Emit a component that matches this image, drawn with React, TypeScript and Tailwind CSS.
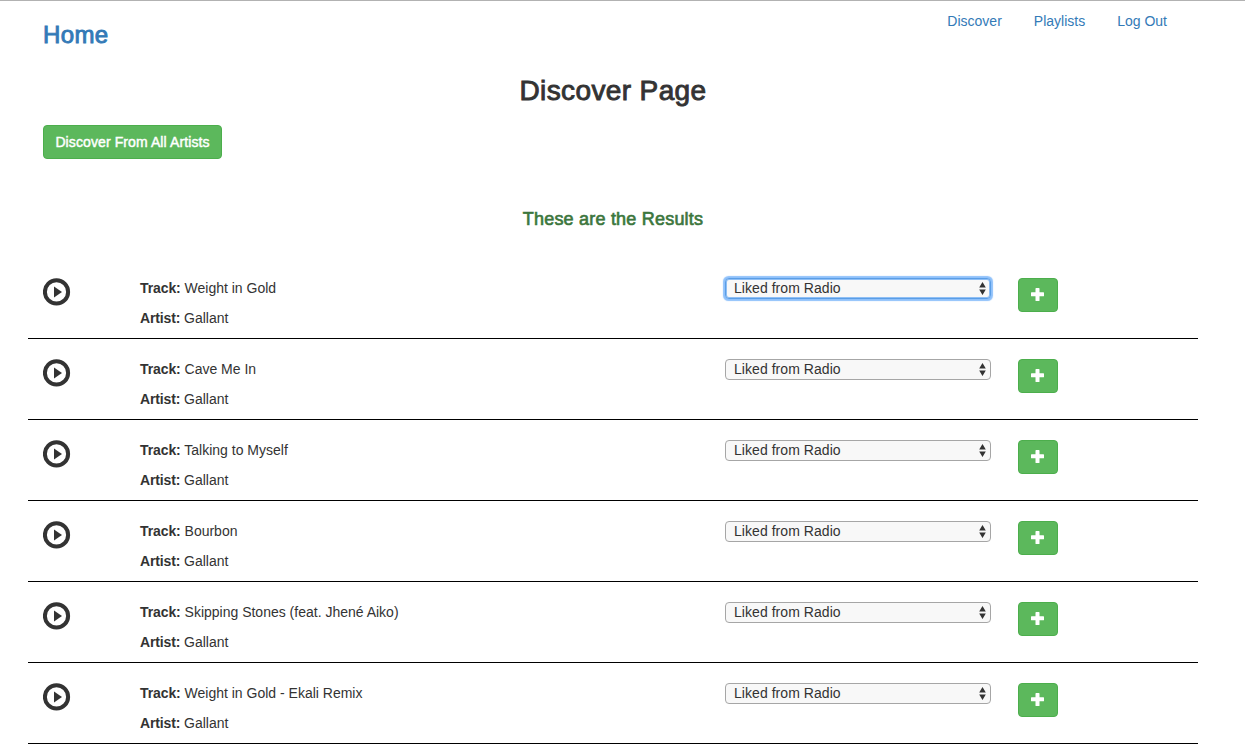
import React from "react";

const tracks = [
  { title: "Weight in Gold", artist: "Gallant" },
  { title: "Cave Me In", artist: "Gallant" },
  { title: "Talking to Myself", artist: "Gallant" },
  { title: "Bourbon", artist: "Gallant" },
  { title: "Skipping Stones (feat. Jhené Aiko)", artist: "Gallant" },
  { title: "Weight in Gold - Ekali Remix", artist: "Gallant" },
];

function PlayIcon() {
  return (
    <svg width="28" height="28" viewBox="0 0 28 28" className="block">
      <circle cx="13.5" cy="13.9" r="11.6" fill="none" stroke="#333" strokeWidth="4" />
      <path d="M11 8.4 19 13.9 11 19.4Z" fill="#333" />
    </svg>
  );
}

function PlaylistSelect({ focused }: { focused: boolean }) {
  return (
    <button
      type="button"
      className={
        "flex h-[21px] w-[266px] items-center justify-between rounded-[4px] border bg-[#f8f8f8] pl-2 pr-1 text-left " +
        (focused
          ? "border-[#5b9ee6] shadow-[inset_0_0_0_1px_#8fbff5,0_0_1px_1.5px_#8fc1fb]"
          : "border-[#a6a6a6]")
      }
    >
      <span className="leading-[19px] tracking-[0.05px]">Liked from Radio</span>
      <svg width="7" height="13" viewBox="0 0 7 13" fill="#333">
        <path d="M3.5 0.1 6.8 5.6H0.2ZM3.5 12.9 6.8 7.6H0.2Z" />
      </svg>
    </button>
  );
}

function TrackRow({ title, artist, focused }: { title: string; artist: string; focused: boolean }) {
  return (
    <div className="grid h-[81px] grid-cols-12 items-start border-b border-black pt-5">
      <div className="pl-[15px]">
        <PlayIcon />
      </div>
      <div className="col-span-6 pl-[14.5px]">
        <p className="mb-2.5">
          <b className="tracking-[-0.1px]">Track:</b> {title}
        </p>
        <p>
          <b className="tracking-[-0.15px]">Artist:</b> {artist}
        </p>
      </div>
      <div className="col-span-3 pl-[14.5px]">
        <PlaylistSelect focused={focused} />
      </div>
      <div className="col-span-2 pl-[15px]">
        <button
          type="button"
          aria-label="Add"
          className="flex h-[34px] w-10 items-center justify-center rounded border border-[#4cae4c] bg-[#5cb85c] pb-px pr-0.5"
        >
          <svg width="13" height="13" viewBox="0 0 13 13" fill="#fff">
            <path d="M5 0h3q.5 0 .5.4v3.9h3.9q.6 0 .6.5v3q0 .5-.6.5H8.500v4.200q0 .5-.5.5H5q-.5 0-.5-.5V8.300H.6Q0 8.300 0 7.800V4.800q0-.5.6-.5h3.900V.4Q4.500 0 5 0Z" />
          </svg>
        </button>
      </div>
    </div>
  );
}

export default function App() {
  return (
    <div className="h-[751px] overflow-hidden border-t border-[#b2b2b2] bg-white font-['Liberation_Sans',Arial,sans-serif] text-sm leading-5 text-[#333]">
      <div className="ml-7 w-[1170px]">
        <header className="flex h-[73px] justify-between pl-[15px] pr-[31px] text-[#337ab7]">
          <a className="pt-5 text-2xl leading-[27px] tracking-[0.4px] [-webkit-text-stroke:0.9px]">Home</a>
          <nav className="flex gap-8 pt-2.5">
            <a>Discover</a>
            <a>Playlists</a>
            <a>Log Out</a>
          </nav>
        </header>
        <h1 className="h-[51px] text-center text-[28px] leading-[33px] tracking-[0.38px] [-webkit-text-stroke:0.9px]">
          Discover Page
        </h1>
        <div className="pl-[15px]">
          <button
            type="button"
            className="h-[34px] w-[179px] whitespace-nowrap rounded border border-[#4cae4c] bg-[#5cb85c] tracking-[0.1px] text-white [-webkit-text-stroke:0.45px]"
          >
            Discover From All Artists
          </button>
        </div>
        <h2 className="mt-[50px] h-[49px] text-center text-lg leading-5 tracking-[0.21px] text-[#3c763d] [-webkit-text-stroke:0.65px]">
          These are the Results
        </h2>
        <main>
          {tracks.map((t, i) => (
            <TrackRow key={t.title} title={t.title} artist={t.artist} focused={i === 0} />
          ))}
        </main>
      </div>
    </div>
  );
}
